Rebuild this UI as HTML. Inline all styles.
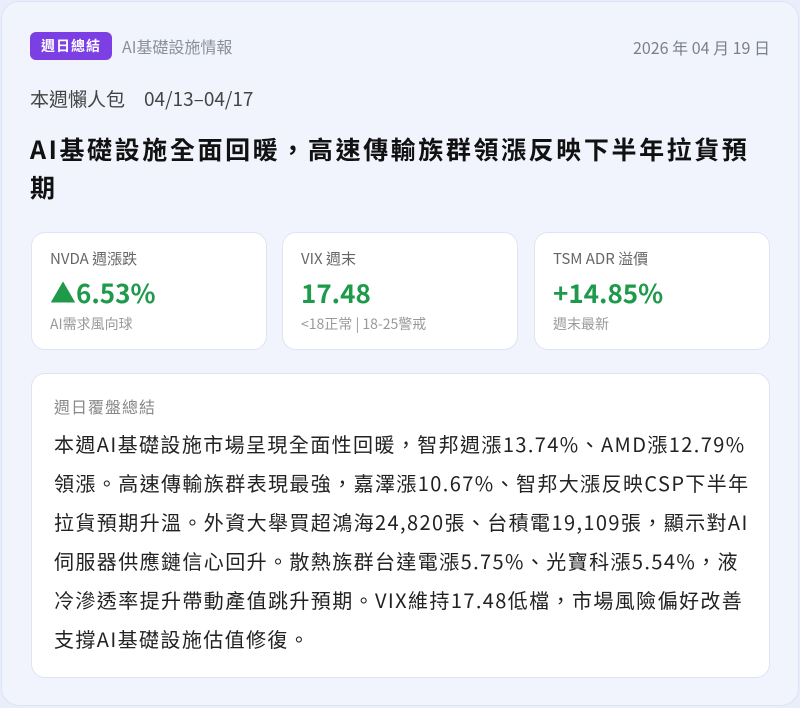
<!DOCTYPE html>
<html><head><meta charset="utf-8"><style>
*{margin:0;padding:0;box-sizing:border-box}
body{width:800px;height:708px;background:#e9eefa;font-family:"Noto Sans CJK TC","Liberation Sans",sans-serif;overflow:hidden}
.outer{position:absolute;left:1px;top:1px;width:798px;height:705px;background:#f1f4fd;border:1px solid #dbe3f6;border-radius:18px}
.badge{position:absolute;left:30px;top:32px;width:82px;height:28px;background:#7b3fe4;color:#fff;border-radius:6px;font-size:14px;font-weight:bold;text-align:center;line-height:28px;letter-spacing:1px}
.cat{position:absolute;left:122px;top:34px;font-size:16px;color:#8a8f99;line-height:24px}
.date{position:absolute;right:30px;top:35px;font-size:16px;color:#7a7f88;line-height:24px}
.week{position:absolute;left:30px;top:85px;font-size:19px;color:#444;line-height:28px}
.title{position:absolute;left:30px;top:130px;width:760px;font-size:25px;font-weight:bold;color:#111;line-height:38px;letter-spacing:2.6px;white-space:nowrap}
.stat{position:absolute;top:232px;width:236px;height:118px;background:#fff;border:1px solid #dde4f4;border-radius:14px}
.stat .l{position:absolute;left:18px;top:15px;font-size:15px;color:#666;line-height:22px}
.stat .v{position:absolute;left:18px;top:42px;font-size:26px;font-weight:bold;color:#1e9a4a;line-height:36px}
.stat .s{position:absolute;left:18px;top:80px;font-size:14px;color:#999;line-height:22px}
.sum{position:absolute;left:31px;top:373px;width:739px;height:305px;background:#fff;border:1px solid #dde4f4;border-radius:14px}
.sum .h{position:absolute;left:22px;top:20px;font-size:16px;color:#888;line-height:24px;letter-spacing:1px}
.sum .b{position:absolute;left:22px;top:50px;font-size:20px;line-height:39px;color:#222;white-space:nowrap;letter-spacing:1.4px}
</style></head><body>
<div class="outer"></div>
<div class="badge">週日總結</div>
<div class="cat">AI基礎設施情報</div>
<div class="date">2026 年 04 月 19 日</div>
<div class="week">本週懶人包　04/13–04/17</div>
<div class="title">AI基礎設施全面回暖，高速傳輸族群領漲反映下半年拉貨預<br>期</div>
<div class="stat" style="left:31px"><div class="l">NVDA 週漲跌</div><div class="v">▲6.53%</div><div class="s">AI需求風向球</div></div>
<div class="stat" style="left:282px"><div class="l">VIX 週末</div><div class="v">17.48</div><div class="s">&lt;18正常 | 18-25警戒</div></div>
<div class="stat" style="left:534px"><div class="l">TSM ADR 溢價</div><div class="v">+14.85%</div><div class="s">週末最新</div></div>
<div class="sum"><div class="h">週日覆盤總結</div>
<div class="b">本週AI基礎設施市場呈現全面性回暖，智邦週漲13.74%、AMD漲12.79%<br>領漲。高速傳輸族群表現最強，嘉澤漲10.67%、智邦大漲反映CSP下半年<br>拉貨預期升溫。外資大舉買超鴻海24,820張、台積電19,109張，顯示對AI<br>伺服器供應鏈信心回升。散熱族群台達電漲5.75%、光寶科漲5.54%，液<br>冷滲透率提升帶動產值跳升預期。VIX維持17.48低檔，市場風險偏好改善<br>支撐AI基礎設施估值修復。</div></div>
</body></html>
